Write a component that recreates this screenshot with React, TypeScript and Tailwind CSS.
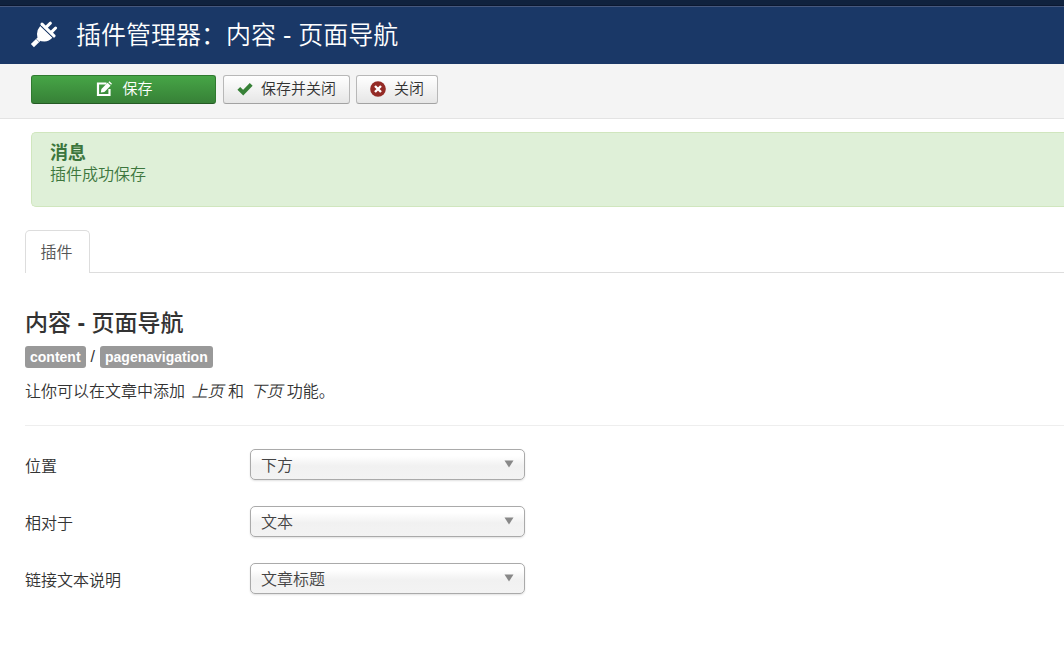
import React from "react";

function PlugIcon() {
  return (
    <svg aria-hidden="true" viewBox="0 -1 28 28" className="h-7 w-7 shrink-0" fill="#fff">
      <path d="M10.2 4 L22.4 15.8 Q19.2 19.4 14.4 19.6 Q11 19.6 8.8 17.4 Q6.8 15.2 7 12 Q7.2 7.4 10.2 4 Z" />
      <path d="M12 2.2 L24 13.8" stroke="#fff" strokeWidth="3.2" strokeLinecap="round" />
      <path d="M16 5.4 L20.4 1.2 M21.2 10.4 L25.6 6" stroke="#fff" strokeWidth="3" strokeLinecap="round" />
      <path d="M9.6 16.6 L2.4 23.6" stroke="#fff" strokeWidth="4.4" />
      <path d="M10.6 3.8 L22.8 15.6" stroke="#1a3867" strokeWidth="0.6" />
      <path d="M6.2 17 L9.4 20.2" stroke="#1a3867" strokeWidth="0.5" />
    </svg>
  );
}

function EditIcon() {
  return (
    <svg aria-hidden="true" viewBox="0 0 16 16" className="h-4 w-4 shrink-0" fill="none">
      <path d="M10.5 2.5 H2 V14 H13.5 V8" stroke="#fff" strokeWidth="2.2" />
      <path d="M4.8 11.4 L5.4 8 L11.6 1.8 L14.6 4.8 L8.4 11 Z M12.4 1.2 L13.4 0.2 L16 2.8 L15.1 3.8 Z" fill="#fff" />
    </svg>
  );
}

function CheckIcon() {
  return (
    <svg aria-hidden="true" viewBox="0 0 16 16" className="h-4 w-4 shrink-0">
      <path d="M1.8 7.4 L6.2 11.6 L14.2 3.4" fill="none" stroke="#378137" strokeWidth="4" />
    </svg>
  );
}

function CancelIcon() {
  return (
    <svg aria-hidden="true" viewBox="0 0 16 16" className="h-4 w-4 shrink-0">
      <circle cx="8" cy="8" r="7.8" fill="#942a25" />
      <path d="M5 5 L11 11 M11 5 L5 11" stroke="#fff" strokeWidth="2.4" />
    </svg>
  );
}

const buttonBase =
  "flex h-[29px] items-center justify-center gap-2 rounded-[3px] border pb-[2px] text-[15px] leading-5";
const plainButton =
  "border-[#b8b8b8] border-b-[#a2a2a2] bg-linear-to-b from-white to-[#e6e6e6] text-[#333]";

function SelectField({ id, label, options }: { id: string; label: string; options: string[] }) {
  return (
    <div className="flex items-center">
      <label htmlFor={id} className="w-[225px] shrink-0 pt-1">
        {label}
      </label>
      <div className="relative w-[275px]">
        <select
          id={id}
          className="block h-[31px] w-full appearance-none rounded-[5px] border border-[#aaa] bg-linear-to-b from-white from-20% via-[#f1f1f1] via-55% to-[#f3f3f3] pt-[2px] pr-8 pl-[10px] text-[16px] font-[350] text-[#444] shadow-[0_1px_2px_rgba(0,0,0,0.12)]"
        >
          {options.map((option) => (
            <option key={option}>{option}</option>
          ))}
        </select>
        <svg
          aria-hidden="true"
          viewBox="0 0 10 8"
          className="pointer-events-none absolute top-[11px] right-[11px] h-2 w-[10px]"
        >
          <path d="M0.5 0.5 H9.5 L5 7.5 Z" fill="#888" />
        </svg>
      </div>
    </div>
  );
}

export default function App() {
  return (
    <div className="min-h-screen overflow-x-hidden bg-white font-['Liberation_Sans','Noto_Sans_CJK_SC',sans-serif] text-[16px] leading-5 font-[350] text-[#333]">
      <div className="h-[6px] border-b border-[#0b1831] bg-[#10223e]" />
      <header className="flex h-[58px] items-center gap-[18px] border-t border-[#46587d] bg-[#1a3867] pb-[2px] pl-[30px]">
        <PlugIcon />
        <h1 className="pt-px text-[25px] leading-9 font-[350] whitespace-nowrap text-white">
          插件管理器：内容 - 页面导航
        </h1>
      </header>

      <div className="flex h-[55px] items-start border-b border-[#e3e3e3] bg-[#f4f4f4] pt-[11px] pl-[31px]">
        <button
          type="button"
          className={`${buttonBase} mr-[7px] w-[185px] border-[#2f7a2f] border-b-[#245a24] bg-linear-to-b from-[#46a546] to-[#378137] pl-[2px] text-white`}
        >
          <EditIcon />
          <span className="pl-[2px]">保存</span>
        </button>
        <button type="button" className={`${buttonBase} ${plainButton} mr-[6px] w-[127px]`}>
          <CheckIcon />
          保存并关闭
        </button>
        <button type="button" className={`${buttonBase} ${plainButton} w-[82px]`}>
          <CancelIcon />
          关闭
        </button>
      </div>

      <main className="pt-[13px] pl-[25px]">
        <div
          role="status"
          className="ml-[6px] h-[75px] rounded-l-[5px] border border-r-0 border-[#d0e6be] bg-[#dff0d8] pt-2 pl-[18px] text-[#3c763d]"
        >
          <h4 className="text-[18px] leading-6 font-bold">消息</h4>
          <p>插件成功保存</p>
        </div>

        <div role="tablist" className="mt-[23px] flex border-b border-[#ddd]">
          <button
            type="button"
            role="tab"
            aria-selected="true"
            className="-mb-px h-[43px] w-[65px] rounded-t-[5px] border border-b-0 border-[#ddd] bg-white pt-[2px] pr-[2px] text-[#555]"
          >
            插件
          </button>
        </div>

        <section className="pt-[35px]">
          <h3 className="text-[23px] leading-[30px] font-medium">
            内容 <span className="font-bold">-</span> 页面导航
          </h3>
          <div className="mt-2 flex items-center gap-[5px]">
            <span className="rounded-[3px] bg-[#999] px-[5px] py-px text-[14px] leading-5 font-bold text-white">
              content
            </span>
            <span>/</span>
            <span className="rounded-[3px] bg-[#999] px-[5px] py-px text-[14px] leading-5 font-bold text-white">
              pagenavigation
            </span>
          </div>
          <p className="mt-[14px]">
            让你可以在文章中添加 <em className="pl-[2px]">上页</em> 和{" "}
            <em className="pl-[2px]">下页</em> 功能。
          </p>
          <hr className="mt-[23px] border-[#eee]" />
          <form className="flex flex-col gap-[26px] pt-[23px]">
            <SelectField id="position" label="位置" options={["下方", "上方"]} />
            <SelectField id="relative" label="相对于" options={["文本", "文章"]} />
            <SelectField id="link-text" label="链接文本说明" options={["文章标题", "下页/上页"]} />
          </form>
        </section>
      </main>
    </div>
  );
}
